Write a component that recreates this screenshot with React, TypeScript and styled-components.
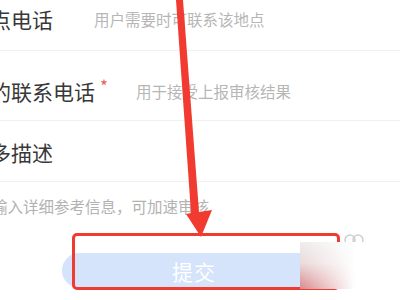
import React from 'react';
import styled, { createGlobalStyle } from 'styled-components';

const GlobalStyle = createGlobalStyle`
  html, body {
    margin: 0;
    padding: 0;
    background: #fff;
  }
  body {
    width: 400px;
    height: 300px;
    overflow: hidden;
    font-family: "Noto Sans CJK SC", "Noto Sans", sans-serif;
  }
`;

const Screen = styled.div`
  position: relative;
  width: 400px;
  height: 300px;
  overflow: hidden;
  background: #fff;
`;

// the screenshot is cropped on the left, so the form is shifted out of view a bit
const Form = styled.div`
  display: flex;
  flex-direction: column;
  width: 431px;
  margin-left: -31px;
`;

const Field = styled.div<{ $top: number; $bottom: number; $height: number }>`
  display: flex;
  align-items: center;
  height: ${(p) => p.$height}px;
  padding: ${(p) => p.$top}px 0 ${(p) => p.$bottom}px 0;
  border-bottom: 1px solid #efefef;
`;

const Label = styled.span<{ $required?: boolean }>`
  position: relative;
  font-size: 21px;
  line-height: 36px;
  color: #383838;
  white-space: nowrap;
  margin-right: 41px;

  &::after {
    content: ${(p) => (p.$required ? '"*"' : 'none')};
    position: absolute;
    right: -13px;
    top: -5px;
    font-size: 17px;
    color: #e8625c;
  }
`;

const Placeholder = styled.span`
  font-size: 15.5px;
  line-height: 20px;
  color: #b6b6b6;
  white-space: nowrap;
`;

const TextArea = styled.div`
  padding: 14px 0 0 23px;
  font-size: 15.5px;
  line-height: 20px;
  color: #b2b2b2;
  white-space: nowrap;
`;

const SubmitButton = styled.button`
  margin: 37px 0 0 93px;
  width: 264px;
  height: 35px;
  border: none;
  border-radius: 18px;
  background: #d5e3fb;
  color: #fff;
  font-family: "Noto Sans CJK SC", "Noto Sans", sans-serif;
  font-size: 21px;
  letter-spacing: 1px;
  padding: 0;
`;

const HighlightBox = styled.div`
  position: absolute;
  left: 72px;
  top: 233px;
  width: 262px;
  height: 51px;
  border: 3px solid #f23b30;
  border-radius: 5px;
  pointer-events: none;
`;

const Overlay = styled.svg`
  position: absolute;
  left: 0;
  top: 0;
  pointer-events: none;
`;

const Watermark = styled.div`
  position: absolute;
  left: 300px;
  top: 242px;
  width: 100px;
  height: 47px;
  background:
    linear-gradient(90deg, rgba(255, 255, 255, 0) 0%, rgba(255, 255, 255, 0.55) 30%, #fff 55%),
    linear-gradient(180deg, #efecec 0%, #eadada 45%, #d9888b 100%);
`;

export default function App() {
  return (
    <Screen>
      <GlobalStyle />
      <Form>
        <Field $top={0} $bottom={12} $height={38}>
          <Label>地点电话</Label>
          <Placeholder>用户需要时可联系该地点</Placeholder>
        </Field>
        <Field $top={22} $bottom={11} $height={36}>
          <Label $required>你的联系电话</Label>
          <Placeholder>用于接受上报审核结果</Placeholder>
        </Field>
        <Field $top={13} $bottom={11} $height={36}>
          <Label>更多描述</Label>
        </Field>
        <TextArea>输入详细参考信息，可加速审核</TextArea>
        <SubmitButton>提交</SubmitButton>
      </Form>

      <Overlay width="400" height="300" viewBox="0 0 400 300">
        <circle cx="350" cy="240" r="5" fill="none" stroke="#cfcfcf" strokeWidth="1.5" />
        <circle cx="358" cy="240" r="5" fill="none" stroke="#cfcfcf" strokeWidth="1.5" />
      </Overlay>
      <HighlightBox />
      <Overlay width="400" height="300" viewBox="0 0 400 300">
        <polygon
          points="176,0 183,0 199,212 212,210 201,237 186,214 191,213"
          fill="#f23b30"
        />
      </Overlay>
      <Watermark />
    </Screen>
  );
}
